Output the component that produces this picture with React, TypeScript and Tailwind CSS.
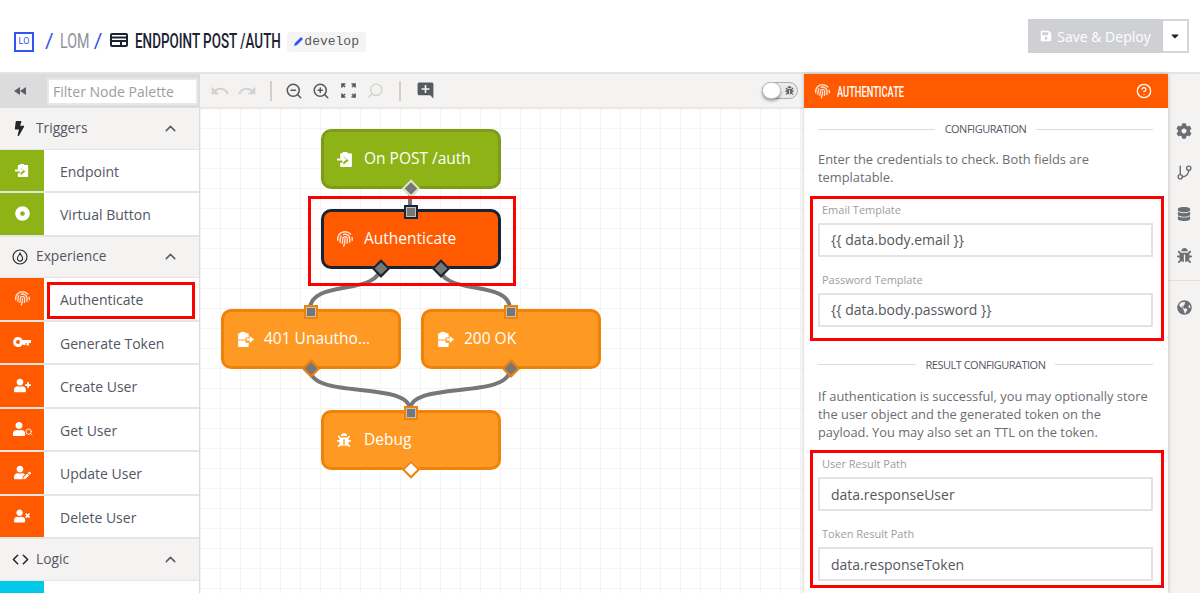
import type { ReactNode } from 'react';
import { ChevronUp, CircleHelp, Code, GitBranch, Search, ZoomIn, ZoomOut } from 'lucide-react';
import {
  FaBolt,
  FaBug,
  FaCaretDown,
  FaCog,
  FaDatabase,
  FaDotCircle,
  FaGlobeAmericas,
  FaSave,
  FaUser,
  FaUserEdit,
  FaUserPlus,
  FaUserTimes,
} from 'react-icons/fa';
import { FaFingerprint } from 'react-icons/fa6';
import { MdAddComment, MdRedo, MdUndo } from 'react-icons/md';

function ClipIn({ size = 16 }: { size?: number }) {
  return (
    <svg width={size} height={size} viewBox="0 0 16 16" fill="currentColor">
      <path d="M6 1h3a1 1 0 0 1 1 1h3a1 1 0 0 1 1 1v11a1 1 0 0 1-1 1H4a1 1 0 0 1-1-1v-3h3v2l5-4-5-4v2H3V3a1 1 0 0 1 1-1h1a1 1 0 0 1 1-1z" />
      <path d="M0 7h5V4.800L9.200 8 5 11.200V9H0z" />
    </svg>
  );
}

function ClipOut({ size = 16 }: { size?: number }) {
  return (
    <svg width={size} height={size} viewBox="0 0 16 16" fill="currentColor">
      <path d="M4 1h3a1 1 0 0 1 1 1h2a1 1 0 0 1 1 1v3H8v2H1V3a1 1 0 0 1 1-1h1a1 1 0 0 1 1-1zM1 9h7v2h3v3a1 1 0 0 1-1 1H2a1 1 0 0 1-1-1z" />
      <path d="M9 7h3V4.600L16 8l-4 3.400V9H9z" />
    </svg>
  );
}

function Flame() {
  return (
    <svg width="16" height="16" viewBox="0 0 16 16" fill="none" stroke="currentColor">
      <circle cx="8" cy="8" r="7" strokeWidth="1.100" />
      <path d="M8 3.500c.4 2-2.600 3.400-2.600 6a2.600 2.600 0 0 0 5.200 0C10.600 7.500 8.500 6 8 3.500z" strokeWidth="1.100" />
    </svg>
  );
}

function Corners() {
  return (
    <svg width="15" height="15" viewBox="0 0 15 15" fill="none" stroke="currentColor" strokeWidth="1.700">
      <path d="M1 4.500V1h3.500M1 1l3 3M14 4.500V1h-3.500M14 1l-3 3M1 10.500V14h3.500M1 14l3-3M14 10.500V14h-3.500M14 14l-3-3" />
    </svg>
  );
}

function Key() {
  return (
    <svg width="18" height="10" viewBox="0 0 18 10" fill="currentColor">
      <path fillRule="evenodd" d="M5 0a5 5 0 0 1 4.600 3H18v3h-2v2.500h-2.500V6h-1v2H10V6.500A5 5 0 1 1 5 0zm0 3a2 2 0 1 0 0 4 2 2 0 0 0 0-4z" />
    </svg>
  );
}

function Section({ icon, title }: { icon: ReactNode; title: string }) {
  return (
    <div className="flex h-[41.5px] shrink-0 items-center border-b border-[#e6e5e3] bg-[#f4f3f2] pl-[12px] pr-[20px] text-[#535663]">
      <span className="flex w-[24px] text-[#22252c]">{icon}</span>
      <span className="flex-1 text-[13.75px]">{title}</span>
      <ChevronUp size={17} strokeWidth={2.200} className="text-[#5a5d66]" />
    </div>
  );
}

function PaletteRow({ icon, label, color }: { icon: ReactNode; label: string; color: string }) {
  return (
    <div className="flex h-[43.5px] shrink-0 border-b-2 border-[#e6e5e3] bg-white">
      <span className={`flex w-[44px] items-center justify-center text-white ${color}`}>{icon}</span>
      <span className="flex items-center pl-[16px] pt-[2px] text-[14px] text-[#535663]">{label}</span>
    </div>
  );
}

function Sidebar() {
  return (
    <aside className="relative flex w-[200px] shrink-0 flex-col overflow-hidden border-r border-[#dcdcdc]">
      <div className="flex h-[34px] shrink-0 items-center bg-[#dcdcdc] pl-[14px] pr-[1px] text-[#5a5d66]">
        <svg width="12" height="8" viewBox="0 0 12 8" fill="currentColor" className="mr-[21px] shrink-0">
          <path d="M6 0v8L0 4zM12 0v8L6 4z" />
        </svg>
        <div className="flex h-[27px] flex-1 items-center border-2 border-[#e8e8e8] bg-white pl-[4px] text-[14px] text-[#9b9da3]">
          Filter Node Palette
        </div>
      </div>
      <Section icon={<FaBolt size={15} />} title="Triggers" />
      <PaletteRow icon={<ClipIn size={15} />} label="Endpoint" color="bg-[#8db316]" />
      <PaletteRow icon={<FaDotCircle size={15} />} label="Virtual Button" color="bg-[#8db316]" />
      <Section icon={<Flame />} title="Experience" />
      <PaletteRow icon={<FaFingerprint size={15} className="opacity-80" />} label="Authenticate" color="bg-[#ff5a00]" />
      <PaletteRow icon={<Key />} label="Generate Token" color="bg-[#ff5a00]" />
      <PaletteRow icon={<FaUserPlus size={17} />} label="Create User" color="bg-[#ff5a00]" />
      <PaletteRow
        icon={
          <span className="flex items-end">
            <FaUser size={14} />
            <Search size={8} strokeWidth={2.500} className="-ml-[1px]" />
          </span>
        }
        label="Get User"
        color="bg-[#ff5a00]"
      />
      <PaletteRow icon={<FaUserEdit size={17} />} label="Update User" color="bg-[#ff5a00]" />
      <PaletteRow icon={<FaUserTimes size={16} />} label="Delete User" color="bg-[#ff5a00]" />
      <Section icon={<Code size={17} strokeWidth={2.200} />} title="Logic" />
      <PaletteRow icon={null} label="" color="bg-[#00c8e6]" />
      <div className="absolute left-[47px] top-[208px] h-[37px] w-[148px] border-[3px] border-[#ff0000]" />
    </aside>
  );
}

function Diamond({ className }: { className: string }) {
  return <span className={`absolute left-1/2 z-10 h-[13px] w-[13px] -translate-x-1/2 rotate-45 border-2 ${className}`} />;
}

function Pin({ className }: { className: string }) {
  return <span className={`absolute -top-[7px] left-1/2 z-10 h-[14px] w-[14px] -translate-x-1/2 border-2 bg-[#777777] shadow-[inset_0_0_0_1px_rgba(255,255,255,0.55)] ${className}`} />;
}

function CanvasNode({
  className,
  icon,
  label,
  children,
}: {
  className: string;
  icon: ReactNode;
  label: string;
  children?: ReactNode;
}) {
  return (
    <div className={`absolute flex h-[60px] w-[180px] items-center rounded-[10px] border-[3px] pl-[13px] text-[15.5px] text-white ${className}`}>
      <span className="flex w-[27px] shrink-0 justify-start">{icon}</span>
      <span>{label}</span>
      {children}
    </div>
  );
}

function Canvas() {
  return (
    <main className="relative w-[604px] shrink-0 overflow-hidden bg-white">
      <div className="flex h-[35px] items-center border-b-2 border-[#e9e8e6] bg-[#f4f3f2] pl-[10px] text-[#56595f]">
        <MdUndo size={20} className="text-[#d2d2d2]" />
        <MdRedo size={20} className="ml-[7px] text-[#d2d2d2]" />
        <span className="mx-[13px] h-[20px] w-[2px] bg-[#cfcfcf]" />
        <ZoomOut size={18} strokeWidth={2} />
        <ZoomIn size={18} strokeWidth={2} className="ml-[9px]" />
        <span className="ml-[11px] flex"><Corners /></span>
        <Search size={17} strokeWidth={2} className="ml-[11px] -scale-x-100 text-[#d2d2d2]" />
        <span className="mx-[15px] h-[20px] w-[2px] bg-[#cfcfcf]" />
        <MdAddComment size={19} />
        <div className="relative ml-auto mr-[6px] flex h-[17px] w-[36px] items-center justify-end rounded-full border border-[#aaaaaa] bg-[#ebebeb] pr-[3px] text-[#666]">
          <FaBug size={9} />
          <span className="absolute -left-[1px] -top-[1px] h-[17px] w-[19px] rounded-full border border-[#bbbbbb] bg-white shadow-[0_2px_3px_rgba(0,0,0,0.35)]" />
        </div>
      </div>
      <div className="absolute inset-x-0 bottom-0 top-[35px] bg-[linear-gradient(#f4f4f4_1px,transparent_1px),linear-gradient(90deg,#f4f4f4_1px,transparent_1px)] bg-[size:20px_20px] bg-[position:0px_-1px]" />

      <svg className="absolute left-0 top-0" width="604" height="519" fill="none" stroke="#777777" strokeWidth="4">
        <path d="M210 115V135" />
        <path d="M180 193C180 222 110 205 110 235" />
        <path d="M240 193C240 222 310 205 310 235" />
        <path d="M110 295C110 326 210 306 210 336" />
        <path d="M310 295C310 326 210 306 210 336" />
      </svg>

      <CanvasNode className="left-[121px] top-[55px] border-[#7d9a18] bg-[#8db316]" icon={<ClipIn size={17} />} label="On POST /auth">
        <Diamond className="-bottom-[9px] border-[#dfe8bd] bg-[#777777]" />
      </CanvasNode>
      <CanvasNode className="left-[121px] top-[135px] border-[#1b2232] bg-[#ff5a00]" icon={<FaFingerprint size={16} className="opacity-80" />} label="Authenticate">
        <Pin className="border-[#1b2232]" />
        <Diamond className="-bottom-[9px] ml-[-30px] border-[#1b2232] bg-[#777777]" />
        <Diamond className="-bottom-[9px] ml-[30px] border-[#1b2232] bg-[#777777]" />
      </CanvasNode>
      <CanvasNode className="left-[21px] top-[235px] border-[#ef8209] bg-[#fe9a24]" icon={<ClipOut size={17} />} label="401 Unautho...">
        <Pin className="border-[#ef8209]" />
        <Diamond className="-bottom-[9px] border-[#ef8209] bg-[#777777]" />
      </CanvasNode>
      <CanvasNode className="left-[221px] top-[235px] border-[#ef8209] bg-[#fe9a24]" icon={<ClipOut size={17} />} label="200 OK">
        <Pin className="border-[#ef8209]" />
        <Diamond className="-bottom-[9px] border-[#ef8209] bg-[#777777]" />
      </CanvasNode>
      <CanvasNode className="left-[121px] top-[336px] border-[#ef8209] bg-[#fe9a24]" icon={<FaBug size={14} />} label="Debug">
        <Pin className="border-[#ef8209]" />
        <Diamond className="-bottom-[9px] border-[#ef8209] bg-white" />
      </CanvasNode>

      <div className="absolute left-[108px] top-[122px] z-20 h-[90px] w-[208px] border-[3px] border-[#ff0000]" />
    </main>
  );
}

function Divider({ title }: { title: string }) {
  return (
    <div className="flex items-center gap-[10px] text-[11px] tracking-[-0.5px] text-[#535663]">
      <span className="h-[1px] flex-1 bg-[#dcdcdc]" />
      <span>{title}</span>
      <span className="h-[1px] flex-1 bg-[#dcdcdc]" />
    </div>
  );
}

function Field({ label, value }: { label: string; value: string }) {
  return (
    <div>
      <div className="pl-[4px] text-[11px] leading-[14px] text-[#9b9da3]">{label}</div>
      <div className="mt-[6px] flex h-[34px] items-center border-2 border-[#e3e3e3] bg-white pl-[11px] text-[14px] text-[#55575c]">
        {value}
      </div>
    </div>
  );
}

function Panel() {
  return (
    <section className="relative z-10 flex w-[364px] shrink-0 flex-col bg-white shadow-[0_0_4px_rgba(0,0,0,0.25)]">
      <div className="flex h-[34px] items-center bg-[#ff5a00] pl-[11px] pr-[16px] text-white">
        <FaFingerprint size={15} className="opacity-80" />
        <span className="ml-[7px] flex-1">
          <span className="inline-block origin-left scale-x-[0.62] whitespace-nowrap font-['Roboto',sans-serif] text-[15px] font-medium">AUTHENTICATE</span>
        </span>
        <CircleHelp size={16} strokeWidth={2} />
      </div>
      <div className="pl-[14px] pr-[15px]">
        <div className="pt-[13px]"><Divider title="CONFIGURATION" /></div>
        <p className="mt-[12px] text-[12.85px] leading-[18px] text-[#6b6d73]">
          Enter the credentials to check. Both fields are templatable.
        </p>
        <div className="mt-[17px] flex flex-col gap-[16px]">
          <Field label="Email Template" value="{{ data.body.email }}" />
          <Field label="Password Template" value="{{ data.body.password }}" />
        </div>
        <div className="mt-[30px]"><Divider title="RESULT CONFIGURATION" /></div>
        <p className="mt-[14px] text-[12.85px] leading-[18px] text-[#6b6d73]">
          If authentication is successful, you may optionally store the user object and the generated token on the payload. You may also set an TTL on the token.
        </p>
        <div className="mt-[16px] flex flex-col gap-[16px]">
          <Field label="User Result Path" value="data.responseUser" />
          <Field label="Token Result Path" value="data.responseToken" />
        </div>
      </div>
      <div className="absolute left-[6px] top-[122px] h-[145px] w-[354px] border-[3px] border-[#ff0000]" />
      <div className="absolute left-[6px] top-[376px] h-[138px] w-[354px] border-[3px] border-[#ff0000]" />
    </section>
  );
}

function Rail() {
  return (
    <nav className="flex w-[32px] shrink-0 flex-col items-center bg-[#f4f3f2] pt-[49px] text-[#6b6e74]">
      <FaCog size={16} />
      <GitBranch size={17} strokeWidth={2} className="mt-[25px]" />
      <FaDatabase size={14} className="mt-[26px]" />
      <FaBug size={15} className="mt-[27px]" />
      <span className="mt-[17px] h-[1px] w-full bg-[#dedede]" />
      <FaGlobeAmericas size={15} className="mt-[19px]" />
    </nav>
  );
}

export default function App() {
  return (
    <div className="flex h-[593px] w-[1200px] flex-col overflow-hidden bg-white font-['Open_Sans','Liberation_Sans',sans-serif]">
      <header className="flex h-[74px] shrink-0 items-center border-b-2 border-[#e4e4e4] pl-[14px] pr-[11px]">
        <div className="mt-[11px] flex items-center font-['Roboto',sans-serif]">
          <span className="flex h-[20px] w-[20px] items-center justify-center border-2 border-[#3355ee] text-[9px] text-[#3355ee]">
            LO
          </span>
          <div className="ml-[11px] flex items-center text-[21px]">
            <span className="text-[#3355ee]">/</span>
            <span className="ml-[6px] inline-block w-[28px] origin-left scale-x-[0.68] text-[#8f929b]">LOM</span>
            <span className="ml-[6px] text-[#3355ee]">/</span>
            <svg width="18" height="14" viewBox="0 0 18 14" fill="none" stroke="#1b2232" strokeWidth="2" className="-mt-[3px] ml-[8px]">
              <rect x="1" y="1" width="16" height="12" rx="1" />
              <path d="M1 4.500h16M1 8h16M11 8v5" />
            </svg>
            <span className="ml-[7px] inline-block w-[147px] origin-left scale-x-[0.64] whitespace-nowrap font-medium text-[#1b2232]">ENDPOINT POST /AUTH</span>
          </div>
          <span className="ml-[5px] flex h-[20px] items-center gap-[1px] rounded-[3px] bg-[#f4f4f4] px-[7px] font-['Liberation_Mono',monospace] text-[13px] text-[#55575c]">
            <svg width="9" height="9" viewBox="0 0 9 9" fill="#3355ee">
              <path d="M7 0l2 2-6 6-3 1 1-3z" />
            </svg>
            develop
          </span>
        </div>
        <div className="ml-auto flex h-[34px]">
          <button className="flex w-[135px] items-center justify-center gap-[5px] bg-[#cfd0d3] text-[14px] text-white">
            <FaSave size={12} />
            Save &amp; Deploy
          </button>
          <span className="flex w-[26px] items-center justify-center border-2 border-l-0 border-[#d5d5d5] text-[#1b2232]">
            <FaCaretDown size={12} />
          </span>
        </div>
      </header>
      <div className="flex min-h-0 flex-1">
        <Sidebar />
        <Canvas />
        <Panel />
        <Rail />
      </div>
    </div>
  );
}
